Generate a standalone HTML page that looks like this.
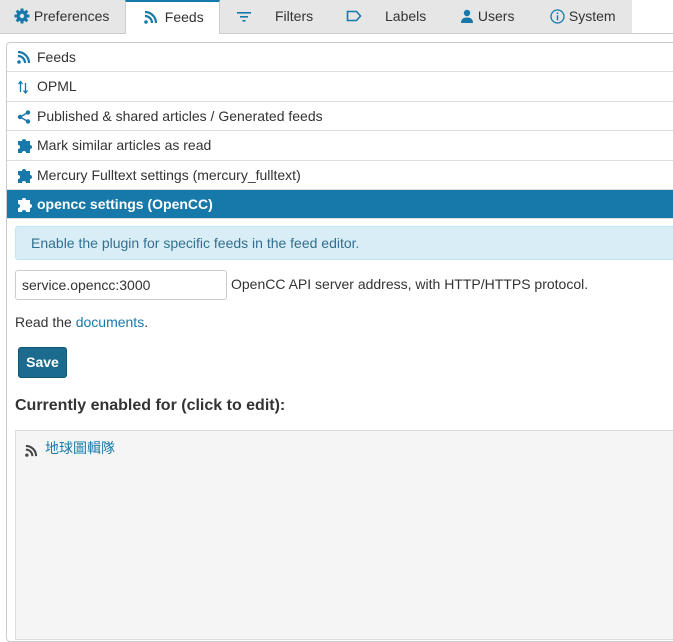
<!DOCTYPE html>
<html><head><style>
*{box-sizing:border-box}
body{margin:0;width:673px;height:632px;overflow:hidden;background:#fff;font-family:"Liberation Sans","Noto Sans CJK TC",sans-serif;font-size:14px;color:#333}
.tabs{position:absolute;left:0;top:0;width:673px;height:34px;border-bottom:1px solid #ccc}
.tabbg{position:absolute;left:0;top:0;width:632px;height:33px;background:#e6e6e6}
.tab{position:absolute;top:0;height:33px;line-height:33px;font-size:14px;color:#333}
.tab.act{background:#fff;border-top:2px solid #1779aa;height:34px;line-height:31px;border-left:1px solid #ccc;border-right:1px solid #ccc}
.ic{fill:#1779aa}
.panel{position:absolute;left:6px;top:42px;width:680px;height:600px;border:1px solid #ccc;border-radius:4px}
.row{height:29.4px;line-height:29px;border-bottom:1px solid #ddd;padding-left:30px;position:relative}
.row svg{position:absolute;left:10px;top:8px}
.row svg.pz{top:6px}
.row.sel{background:#1779aa;color:#fff;font-weight:bold}
.info{position:absolute;left:15px;top:226px;width:670px;height:34px;background:#d9edf7;border:1px solid #bce8f1;border-radius:3px;color:#31708f;line-height:32px;padding-left:15px}
.inp{position:absolute;left:15px;top:270px;width:212px;height:30px;border:1px solid #ccc;border-radius:3px;line-height:28px;padding-left:6px}
.a{color:#1779aa}
.btn{position:absolute;left:18px;top:347px;width:49px;height:31px;background:#1b6b8e;border:1px solid #0f5775;border-radius:3px;color:#fff;font-weight:bold;text-align:center;line-height:29px}
.list{position:absolute;left:15px;top:430px;width:670px;height:210px;background:#f5f5f5;border:1px solid #ddd}
</style></head><body>
<div class="tabs"><div class="tabbg"></div>
<div class="tab" style="left:14px"><svg width="16" height="16" viewBox="0 0 16 16" style="vertical-align:-3px"><circle cx="8" cy="8" r="5.5" class="ic"/><g class="ic"><rect x="6.5" y="0.5" width="3" height="15"/><rect x="0.5" y="6.5" width="15" height="3"/><rect x="6.5" y="0.5" width="3" height="15" transform="rotate(45 8 8)"/><rect x="6.5" y="0.5" width="3" height="15" transform="rotate(-45 8 8)"/></g><circle cx="8" cy="8" r="2.2" fill="#e6e6e6"/></svg> Preferences</div>
<div class="tab act" style="left:125px;width:95px;padding-left:18px"><svg width="13" height="13" viewBox="0 0 13 13" style="vertical-align:-2px"><circle cx="2" cy="11" r="1.8" class="ic"/><path d="M1 5a7 7 0 0 1 7 7M1 1a11 11 0 0 1 11 11" stroke="#1779aa" stroke-width="2.2" fill="none"/></svg>&nbsp; Feeds</div>
<div class="tab" style="left:237px"><svg width="14" height="12" viewBox="0 0 14 12" style="vertical-align:-1px"><rect x="0" y="2" width="14" height="1.6" class="ic"/><rect x="3" y="6" width="8" height="1.6" class="ic"/><rect x="5.5" y="10" width="3" height="1.6" class="ic"/></svg></div>
<div class="tab" style="left:275px">Filters</div>
<div class="tab" style="left:346px"><svg width="16" height="12" viewBox="0 0 16 12" style="vertical-align:-1px"><path d="M1.5 1.5h9l4 4.5-4 4.5h-9z" stroke="#1779aa" stroke-width="1.6" fill="none"/></svg></div>
<div class="tab" style="left:385px">Labels</div>
<div class="tab" style="left:460px"><svg width="14" height="14" viewBox="0 0 14 14" style="vertical-align:-2px"><circle cx="7" cy="4" r="3.2" class="ic"/><path d="M1 14c0-4 2.5-5.5 6-5.5s6 1.5 6 5.5z" class="ic"/></svg> Users</div>
<div class="tab" style="left:550px"><svg width="15" height="15" viewBox="0 0 15 15" style="vertical-align:-3px"><circle cx="7.5" cy="7.5" r="6.5" stroke="#1779aa" stroke-width="1.3" fill="none"/><rect x="6.8" y="6.3" width="1.4" height="5" class="ic"/><circle cx="7.5" cy="4.2" r="0.9" class="ic"/></svg> System</div>
</div>
<div class="panel">
<div class="row"><svg width="13" height="13" viewBox="0 0 13 13"><circle cx="2" cy="11" r="1.8" class="ic"/><path d="M1 5a7 7 0 0 1 7 7M1 1a11 11 0 0 1 11 11" stroke="#1779aa" stroke-width="2.2" fill="none"/></svg>Feeds</div>
<div class="row"><svg width="12" height="14" viewBox="0 0 12 14"><path d="M3.5 12V2M1.5 4l2-2.5 2 2.5M8.5 3v10M6.5 10.5l2 2.5 2-2.5" stroke="#1779aa" stroke-width="1.3" fill="none"/></svg>OPML</div>
<div class="row"><svg width="14" height="14" viewBox="0 0 14 14"><circle cx="11" cy="2.5" r="2.2" class="ic"/><circle cx="3" cy="7" r="2.2" class="ic"/><circle cx="11" cy="11.5" r="2.2" class="ic"/><path d="M11 2.5L3 7l8 4.5" stroke="#1779aa" stroke-width="1.4" fill="none"/></svg>Published &amp; shared articles / Generated feeds</div>
<div class="row"><svg class="pz" width="16" height="16" viewBox="0 0 16 16"><path d="M1 4h4a2 2 0 1 1 4 0h4v4a2 2 0 1 1 0 4v4H9a2 2 0 1 0-4 0H1v-4a2 2 0 1 0 0-4z" class="ic"/></svg>Mark similar articles as read</div>
<div class="row"><svg class="pz" width="16" height="16" viewBox="0 0 16 16"><path d="M1 4h4a2 2 0 1 1 4 0h4v4a2 2 0 1 1 0 4v4H9a2 2 0 1 0-4 0H1v-4a2 2 0 1 0 0-4z" class="ic"/></svg>Mercury Fulltext settings (mercury_fulltext)</div>
<div class="row sel"><svg class="pz" width="16" height="16" viewBox="0 0 16 16"><path d="M1 4h4a2 2 0 1 1 4 0h4v4a2 2 0 1 1 0 4v4H9a2 2 0 1 0-4 0H1v-4a2 2 0 1 0 0-4z" fill="#fff"/></svg>opencc settings (OpenCC)</div>
</div>
<div class="info">Enable the plugin for specific feeds in the feed editor.</div>
<div class="inp">service.opencc:3000</div>
<div style="position:absolute;left:231px;top:276px">OpenCC API server address, with HTTP/HTTPS protocol.</div>
<div style="position:absolute;left:15px;top:314px">Read the <span class="a">documents</span>.</div>
<div class="btn">Save</div>
<div style="position:absolute;left:15px;top:397px;font-size:16px;font-weight:bold">Currently enabled for (click to edit):</div>
<div class="list"><svg width="12" height="12" viewBox="0 0 13 13" style="position:absolute;left:9px;top:14px"><circle cx="2" cy="11" r="1.8" fill="#444"/><path d="M1 5a7 7 0 0 1 7 7M1 1a11 11 0 0 1 11 11" stroke="#444" stroke-width="2.2" fill="none"/></svg><span class="a" style="position:absolute;left:29px;top:7px">地球圖輯隊</span></div>
</body></html>
